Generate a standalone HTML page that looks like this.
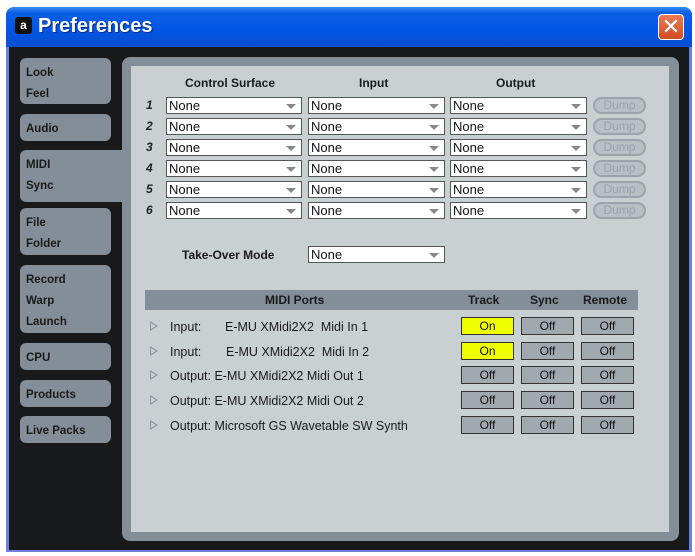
<!DOCTYPE html>
<html><head><meta charset="utf-8"><style>
*{margin:0;padding:0;box-sizing:border-box}
body{width:695px;height:556px;background:#fff;position:relative;overflow:hidden;font-family:"Liberation Sans",Arial,sans-serif}
.a{position:absolute}
.win{left:6px;top:7px;width:686px;height:545px;background:#6f7ee0;border-radius:8px 8px 0 0}
.title{left:6px;top:7px;width:686px;height:40px;border-radius:8px 8px 0 0;background:linear-gradient(#3a8cf5 0%,#0b5fe6 15%,#0055e3 60%,#0a4fd0 100%)}
.ttxt{left:38px;top:15px;color:#fff;font-size:20px;font-weight:bold;text-shadow:1px 1px 1px #0a2a80}
.ico{left:15px;top:17px;width:17px;height:17px;background:#111;border-radius:3px;color:#fff;font-size:12px;font-weight:bold;text-align:center;line-height:17px}
.close{left:658px;top:14px;width:26px;height:26px;border-radius:4px;border:1px solid #fff;background:linear-gradient(#ea7a55,#d34a22);color:#fff;font-size:22px;text-align:center;line-height:24px}
.body{left:9px;top:47px;width:680px;height:503px;background:#18191b}
.panel{left:122px;top:57px;width:557px;height:484px;background:#838e98;border-radius:8px}
.inner{left:131px;top:66px;width:538px;height:466px;background:#c8d0d2}
.tab{left:20px;width:91px;background:#838e98;border-radius:6px;color:#1a1a1a;font-weight:bold;font-size:11.5px;padding:5px 0 0 6px;line-height:21px}
.tab.act{width:102px;border-radius:6px 0 0 6px}
.hd{font-weight:bold;font-size:12px;color:#1a1a1a}
.dd{height:17px;background:#fff;border:1px solid #555;font-size:13px;color:#111;padding-left:2px;line-height:15px}
.dd:after{content:"";position:absolute;right:5px;top:6px;border-left:5px solid transparent;border-right:5px solid transparent;border-top:5px solid #888}
.num{font-weight:bold;font-style:italic;font-size:12px;left:146px;color:#222}
.dump{width:53px;height:17px;border:2px solid #9aa4aa;border-radius:9px;background:#b7c0c3;color:#9aa3a8;font-size:12px;text-align:center;line-height:13px}
.bar{left:145px;top:290px;width:493px;height:20px;background:#838e98}
.row{font-size:12.5px;color:#1a1a1a}
.tri{width:0;height:0;border-top:5px solid transparent;border-bottom:5px solid transparent;border-left:8px solid #8d969c}
.tri:after{content:"";position:absolute;left:-7px;top:-3px;border-top:3px solid transparent;border-bottom:3px solid transparent;border-left:5px solid #c8d0d2}
.btn{width:53px;height:18px;border:1px solid #333;background:#a0a9ae;font-size:12px;text-align:center;line-height:16px;color:#111}
.on{background:#f0ff00}
</style></head><body>
<div class="a win"></div>
<div class="a title"></div>
<div class="a ico">a</div>
<div class="a ttxt">Preferences</div>
<div class="a close">✕</div>
<div class="a body"></div>
<div class="a panel"></div>
<div class="a tab" style="top:58px;height:46px">Look<br>Feel</div>
<div class="a tab" style="top:114px;height:27px">Audio</div>
<div class="a tab act" style="top:150px;height:52px">MIDI<br>Sync</div>
<div class="a tab" style="top:208px;height:47px">File<br>Folder</div>
<div class="a tab" style="top:265px;height:68px">Record<br>Warp<br>Launch</div>
<div class="a tab" style="top:343px;height:27px">CPU</div>
<div class="a tab" style="top:380px;height:27px">Products</div>
<div class="a tab" style="top:416px;height:27px">Live Packs</div>
<div class="a inner"></div>

<div class="a hd" style="left:185px;top:76px">Control Surface</div>
<div class="a hd" style="left:359px;top:76px">Input</div>
<div class="a hd" style="left:496px;top:76px">Output</div>

<div class="a num" style="top:98px">1</div>
<div class="a num" style="top:119px">2</div>
<div class="a num" style="top:140px">3</div>
<div class="a num" style="top:161px">4</div>
<div class="a num" style="top:182px">5</div>
<div class="a num" style="top:203px">6</div>

<div class="a dd" style="left:166px;top:97px;width:136px">None</div><div class="a dd" style="left:308px;top:97px;width:137px">None</div><div class="a dd" style="left:450px;top:97px;width:137px">None</div><div class="a dump" style="left:593px;top:97px">Dump</div>
<div class="a dd" style="left:166px;top:118px;width:136px">None</div><div class="a dd" style="left:308px;top:118px;width:137px">None</div><div class="a dd" style="left:450px;top:118px;width:137px">None</div><div class="a dump" style="left:593px;top:118px">Dump</div>
<div class="a dd" style="left:166px;top:139px;width:136px">None</div><div class="a dd" style="left:308px;top:139px;width:137px">None</div><div class="a dd" style="left:450px;top:139px;width:137px">None</div><div class="a dump" style="left:593px;top:139px">Dump</div>
<div class="a dd" style="left:166px;top:160px;width:136px">None</div><div class="a dd" style="left:308px;top:160px;width:137px">None</div><div class="a dd" style="left:450px;top:160px;width:137px">None</div><div class="a dump" style="left:593px;top:160px">Dump</div>
<div class="a dd" style="left:166px;top:181px;width:136px">None</div><div class="a dd" style="left:308px;top:181px;width:137px">None</div><div class="a dd" style="left:450px;top:181px;width:137px">None</div><div class="a dump" style="left:593px;top:181px">Dump</div>
<div class="a dd" style="left:166px;top:202px;width:136px">None</div><div class="a dd" style="left:308px;top:202px;width:137px">None</div><div class="a dd" style="left:450px;top:202px;width:137px">None</div><div class="a dump" style="left:593px;top:202px">Dump</div>

<div class="a hd" style="left:182px;top:248px">Take-Over Mode</div>
<div class="a dd" style="left:308px;top:246px;width:137px">None</div>

<div class="a bar"></div>
<div class="a hd" style="left:265px;top:293px">MIDI Ports</div>
<div class="a hd" style="left:468px;top:293px">Track</div>
<div class="a hd" style="left:530px;top:293px">Sync</div>
<div class="a hd" style="left:583px;top:293px">Remote</div>

<div class="a tri" style="left:150px;top:321px"></div><div class="a row" style="left:170px;top:320px">Input:</div><div class="a row" style="left:225px;top:320px">E-MU XMidi2X2&nbsp; Midi In 1</div>
<div class="a btn on" style="left:461px;top:317px">On</div><div class="a btn" style="left:521px;top:317px">Off</div><div class="a btn" style="left:581px;top:317px">Off</div>
<div class="a tri" style="left:150px;top:346px"></div><div class="a row" style="left:170px;top:345px">Input:</div><div class="a row" style="left:226px;top:345px">E-MU XMidi2X2&nbsp; Midi In 2</div>
<div class="a btn on" style="left:461px;top:342px">On</div><div class="a btn" style="left:521px;top:342px">Off</div><div class="a btn" style="left:581px;top:342px">Off</div>
<div class="a tri" style="left:150px;top:370px"></div><div class="a row" style="left:170px;top:369px">Output: E-MU XMidi2X2 Midi Out 1</div>
<div class="a btn" style="left:461px;top:366px">Off</div><div class="a btn" style="left:521px;top:366px">Off</div><div class="a btn" style="left:581px;top:366px">Off</div>
<div class="a tri" style="left:150px;top:395px"></div><div class="a row" style="left:170px;top:394px">Output: E-MU XMidi2X2 Midi Out 2</div>
<div class="a btn" style="left:461px;top:391px">Off</div><div class="a btn" style="left:521px;top:391px">Off</div><div class="a btn" style="left:581px;top:391px">Off</div>
<div class="a tri" style="left:150px;top:420px"></div><div class="a row" style="left:170px;top:419px">Output: Microsoft GS Wavetable SW Synth</div>
<div class="a btn" style="left:461px;top:416px">Off</div><div class="a btn" style="left:521px;top:416px">Off</div><div class="a btn" style="left:581px;top:416px">Off</div>
</body></html>
